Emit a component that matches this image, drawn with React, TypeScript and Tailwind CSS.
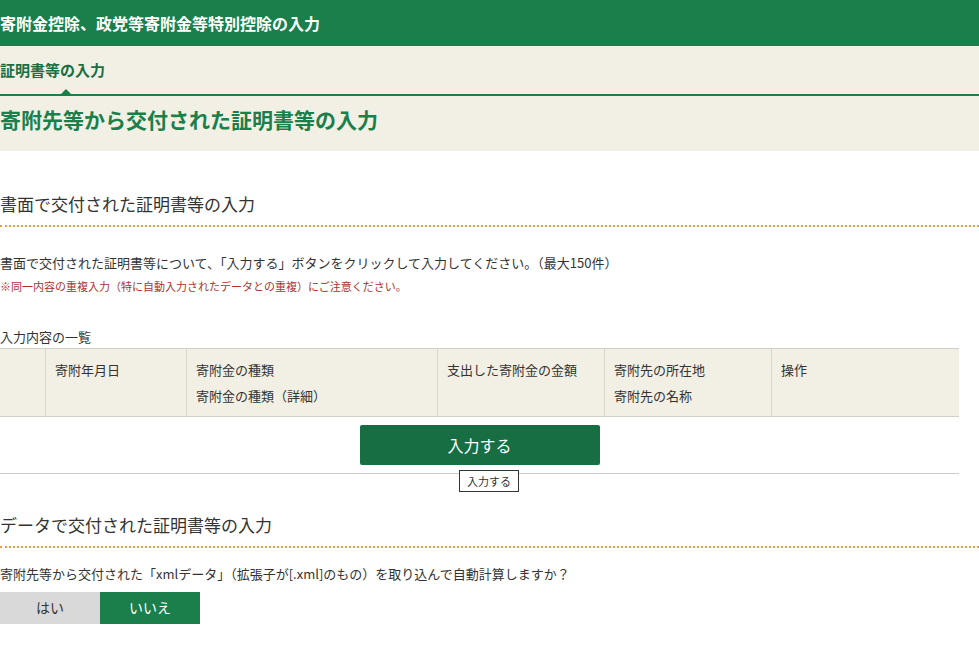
export default function App() {
  const f = { fontFamily: '"Noto Sans CJK JP", "Noto Sans", sans-serif' };
  return (
    <div style={f} className="w-[979px] h-[671px] overflow-hidden bg-white text-[#333]">
      <div className="h-[46px] bg-[#1a7f4b] flex items-center text-white font-bold text-[16px]">寄附金控除、政党等寄附金等特別控除の入力</div>
      <div className="bg-[#f2efe4] h-[105px]">
        <div className="h-[48px] flex items-center text-[#1a6e42] font-bold text-[15px] relative">
          証明書等の入力
          <span className="absolute left-[61px] bottom-0 w-0 h-0 border-l-[5px] border-r-[5px] border-b-[5px] border-l-transparent border-r-transparent border-b-[#1a7f4b]"></span>
        </div>
        <div className="border-t-2 border-[#1a7f4b] text-[#1a7f4b] font-bold text-[21px] pt-[8px] leading-[30px]">寄附先等から交付された証明書等の入力</div>
      </div>
      <div className="mt-[40px] text-[17px] pb-[8px] leading-[26px] border-b-2 border-dotted border-[#e8a02e]">書面で交付された証明書等の入力</div>
      <div className="mt-[26px] text-[13px]">書面で交付された証明書等について、「入力する」ボタンをクリックして入力してください。（最大150件）</div>
      <div className="mt-[5px] text-[11px] text-[#a33]">※同一内容の重複入力（特に自動入力されたデータとの重複）にご注意ください。</div>
      <div className="mt-[34px] text-[13px] leading-[18px]">入力内容の一覧</div>
      <div className="w-[959px] mt-[2px] flex bg-[#f2efe4] border-y border-[#d0cfc8] h-[69px] text-[13px] leading-[26px]">
        <div className="w-[46px] border-r border-[#d8d6ce]"></div>
        <div className="w-[141px] border-r border-[#d8d6ce] px-[9px] pt-[8px]">寄附年月日</div>
        <div className="w-[251px] border-r border-[#d8d6ce] px-[9px] pt-[8px]">寄附金の種類<br />寄附金の種類（詳細）</div>
        <div className="w-[167px] border-r border-[#d8d6ce] px-[9px] pt-[8px]">支出した寄附金の金額</div>
        <div className="w-[167px] border-r border-[#d8d6ce] px-[9px] pt-[8px]">寄附先の所在地<br />寄附先の名称</div>
        <div className="flex-1 px-[9px] pt-[8px]">操作</div>
      </div>
      <div className="w-[959px] h-[57px] border-b border-[#ccc] flex justify-center pt-[8px] relative">
        <button className="w-[240px] h-[40px] bg-[#166e42] text-white text-[16px] rounded-[2px]">入力する</button>
        <div className="absolute left-[459px] top-[53px] border border-[#333] bg-white text-[11px] px-[7px] py-[2px] leading-[16px]">入力する</div>
      </div>
      <div className="mt-[38px] text-[17px] pb-[8px] leading-[26px] border-b-2 border-dotted border-[#e8a02e]">データで交付された証明書等の入力</div>
      <div className="mt-[16px] text-[13px]">寄附先等から交付された「xmlデータ」（拡張子が[.xml]のもの）を取り込んで自動計算しますか？</div>
      <div className="mt-[8px] flex text-[14px]">
        <button className="w-[100px] h-[32px] bg-[#d9d9d9] text-[#333]">はい</button>
        <button className="w-[100px] h-[32px] bg-[#1a7f4b] text-white">いいえ</button>
      </div>
    </div>
  );
}
